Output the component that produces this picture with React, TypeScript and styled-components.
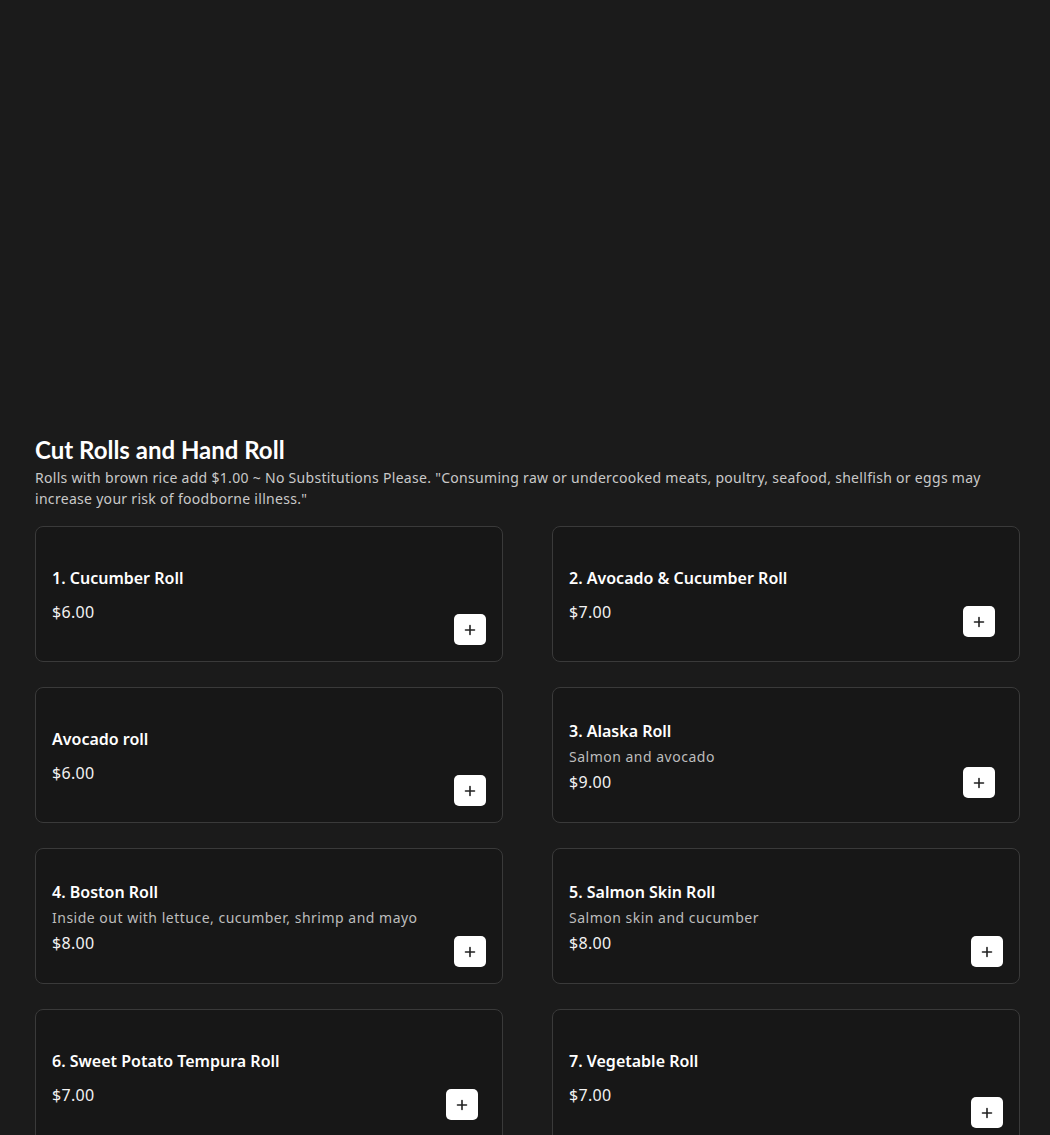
import React from 'react';
import styled, { createGlobalStyle } from 'styled-components';

type Item = {
  name: string;
  price: string;
  description?: string;
  inset: number;
};

const items: Item[] = [
  { name: '1. Cucumber Roll', price: '$6.00', inset: 17 },
  { name: '2. Avocado & Cucumber Roll', price: '$7.00', inset: 25 },
  { name: 'Avocado roll', price: '$6.00', inset: 17 },
  { name: '3. Alaska Roll', description: 'Salmon and avocado', price: '$9.00', inset: 25 },
  {
    name: '4. Boston Roll',
    description: 'Inside out with lettuce, cucumber, shrimp and mayo',
    price: '$8.00',
    inset: 17,
  },
  { name: '5. Salmon Skin Roll', description: 'Salmon skin and cucumber', price: '$8.00', inset: 17 },
  { name: '6. Sweet Potato Tempura Roll', price: '$7.00', inset: 25 },
  { name: '7. Vegetable Roll', price: '$7.00', inset: 17 },
];

const App = () => {
  return (
    <>
      <GlobalStyle />
      <Page>
        <Section>
          <Title>Cut Rolls and Hand Roll</Title>
          <Notice>
            Rolls with brown rice add $1.00 ~ No Substitutions Please. "Consuming raw or undercooked
            meats, poultry, seafood, shellfish or eggs may increase your risk of foodborne illness."
          </Notice>
          <Grid>
            {items.map((item) => (
              <Card key={item.name}>
                <Info>
                  <Name>{item.name}</Name>
                  {item.description && <Description>{item.description}</Description>}
                  <Price $spaced={!item.description}>{item.price}</Price>
                </Info>
                <AddBtn $inset={item.inset} aria-label={`Add ${item.name}`}>
                  <svg width="12" height="12" viewBox="0 0 12 12">
                    <path d="M6 1.5v9M1.5 6h9" stroke="#222" strokeWidth="1.6" strokeLinecap="round" />
                  </svg>
                </AddBtn>
              </Card>
            ))}
          </Grid>
        </Section>
      </Page>
    </>
  );
};

const GlobalStyle = createGlobalStyle`
  body {
    margin: 0;
    background: #1b1b1b;
    font-family: 'Noto Sans', 'Open Sans', sans-serif;
  }
`;

const Page = styled.main`
  height: 1135px;
  padding: 436px 30px 0 35px;
  box-sizing: border-box;
  overflow: hidden;
`;

const Section = styled.section`
  display: flex;
  flex-direction: column;
`;

const Title = styled.h2`
  color: #fff;
  font-family: 'Lato', sans-serif;
  font-size: 24px;
  font-weight: 700;
  line-height: 28px;
  margin: 0 0 3px;
`;

const Notice = styled.p`
  color: #c9c9c9;
  font-size: 14px;
  letter-spacing: 0.3px;
  line-height: 21px;
  margin: 0 0 17px;
`;

const Grid = styled.div`
  display: grid;
  grid-template-columns: repeat(2, 468px);
  column-gap: 49px;
  row-gap: 25px;
`;

const Card = styled.div`
  position: relative;
  box-sizing: border-box;
  height: 136px;
  padding: 2px 16px 0;
  display: flex;
  align-items: center;
  background: #171717;
  border: 1px solid #3a3a3a;
  border-radius: 8px;
`;

const Info = styled.div`
  display: flex;
  flex-direction: column;
`;

const Name = styled.h3`
  color: #fff;
  font-size: 16px;
  font-weight: 600;
  line-height: 24px;
  margin: 0;
`;

const Description = styled.p`
  color: #bdbdbd;
  font-size: 14px;
  letter-spacing: 0.5px;
  line-height: 20px;
  margin: 4px 0 0;
`;

const Price = styled.span<{ $spaced: boolean }>`
  color: #f2f2f2;
  font-size: 16px;
  letter-spacing: 0.3px;
  line-height: 24px;
  margin-top: ${(p) => (p.$spaced ? '10px' : '3px')};
`;

const AddBtn = styled.button<{ $inset: number }>`
  position: absolute;
  right: ${(p) => p.$inset - 1}px;
  bottom: ${(p) => p.$inset - 1}px;
  width: 32px;
  height: 31px;
  padding: 0;
  display: flex;
  align-items: center;
  justify-content: center;
  background: #fff;
  border: none;
  border-radius: 5px;
  cursor: pointer;
`;

export default App;
